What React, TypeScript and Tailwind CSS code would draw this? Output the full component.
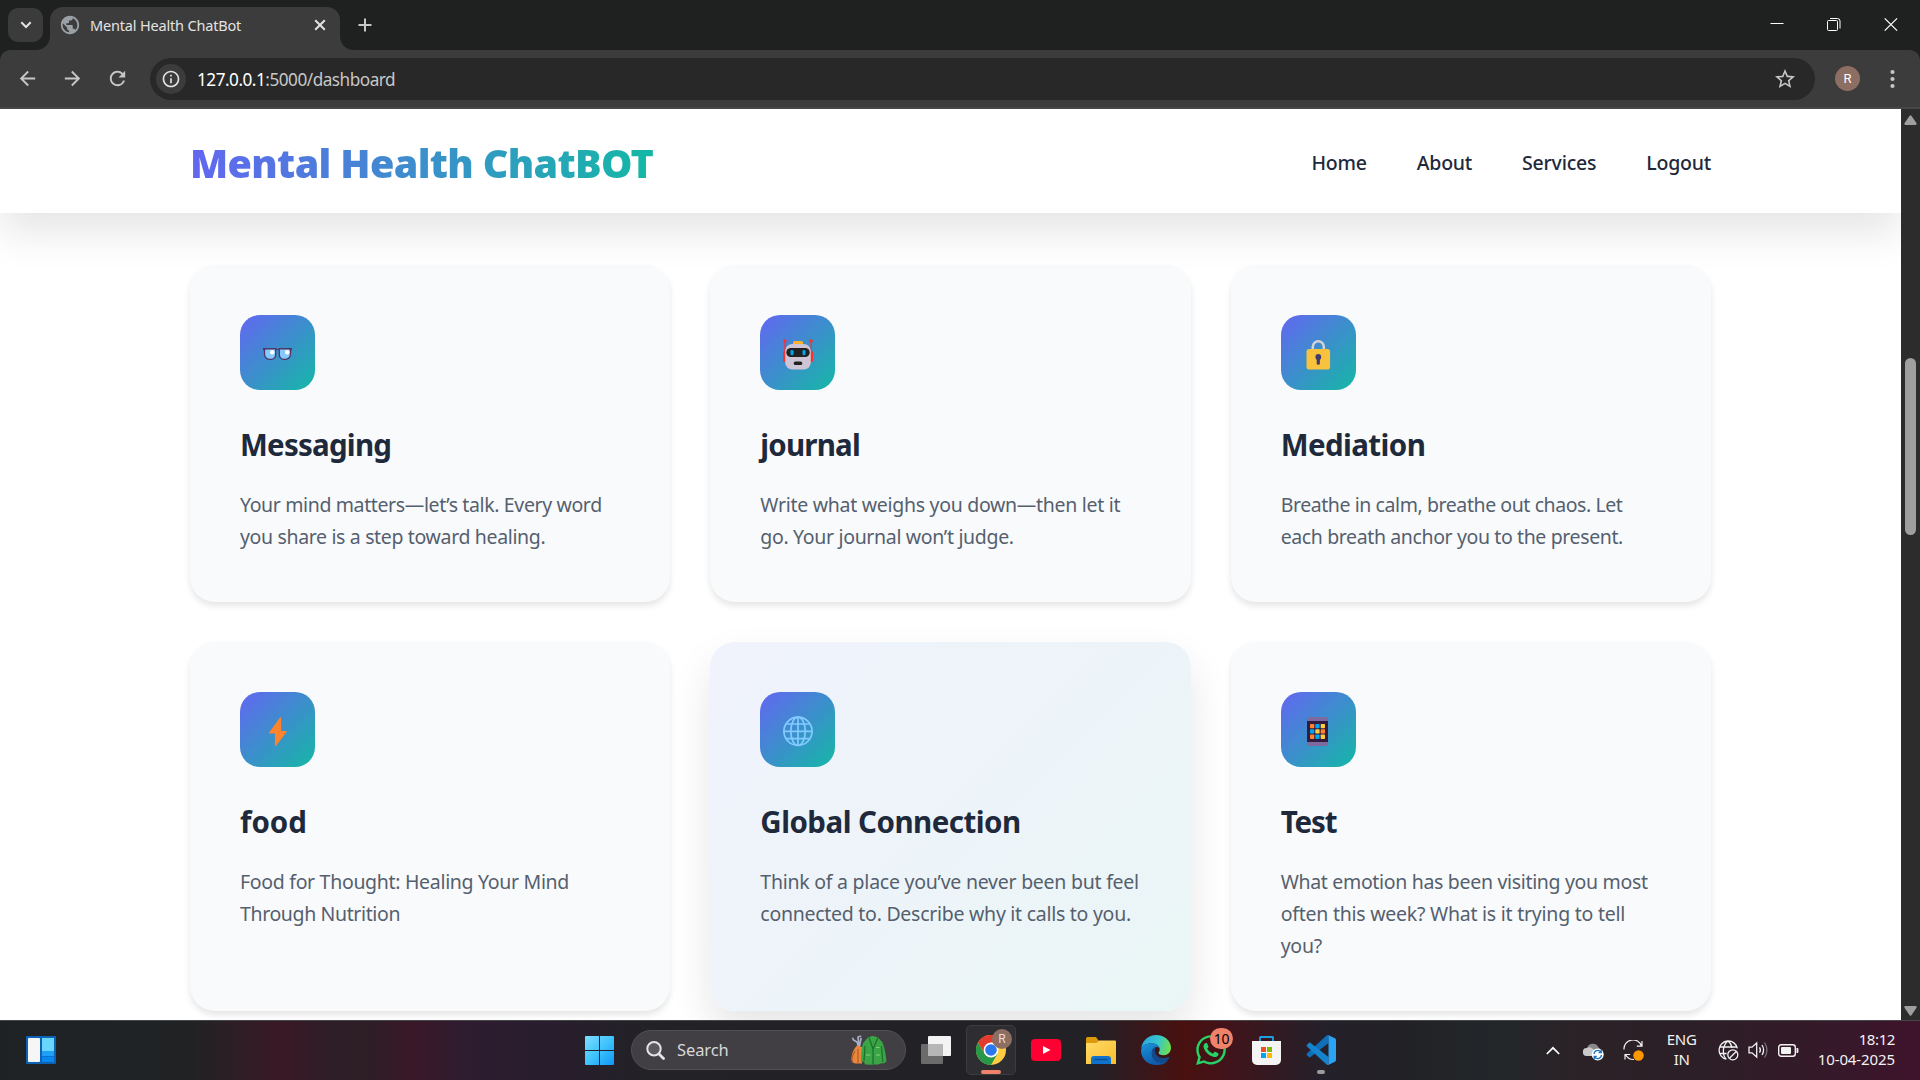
import type { ReactNode } from "react";
import { MdArrowBack, MdArrowForward, MdInfoOutline, MdPublic, MdRefresh, MdStarBorder } from "react-icons/md";
import { FaWhatsapp } from "react-icons/fa";

function TabStrip() {
  return (
    <div className="flex h-[50px] items-start bg-[#1f2120]">
      <div className="mt-2 ml-2 flex h-[34px] w-[35px] items-center justify-center rounded-[10px] bg-[#3b3b3b]">
        <svg width="12" height="8" viewBox="0 0 12 8" fill="none" stroke="#e3e3e3" strokeWidth="2">
          <path d="M1.3 1.3 6 6l4.700-4.700" />
        </svg>
      </div>
      <div className="relative mt-[7px] ml-[7px] flex h-[43px] w-[290px] items-center rounded-t-[13px] bg-[#3c3c3c] pl-[9px]">
        <svg className="absolute bottom-0 -left-[14px]" width="14" height="14" viewBox="0 0 14 14" fill="#3c3c3c">
          <path d="M14 0v14H0C8 14 14 8 14 0Z" />
        </svg>
        <svg className="absolute -right-[14px] bottom-0" width="14" height="14" viewBox="0 0 14 14" fill="#3c3c3c">
          <path d="M0 0v14h14C6 14 0 8 0 0Z" />
        </svg>
        <MdPublic className="mb-[7px] size-[22px] text-[#9aa0a6]" />
        <span className="mb-[7px] ml-[9px] w-[224px] whitespace-nowrap text-[14.5px] leading-none tracking-[-0.18px] text-[#e3e3e3]">
          Mental Health ChatBot
        </span>
        <svg className="mb-[7px]" width="12" height="12" viewBox="0 0 12 12" stroke="#e3e3e3" strokeWidth="2">
          <path d="m1.200 1.200 9.600 9.600M10.800 1.200 1.200 10.800" />
        </svg>
      </div>
      <svg className="mt-[18px] ml-[18px]" width="14" height="14" viewBox="0 0 14 14" stroke="#c7c7c7" strokeWidth="2">
        <path d="M7 .5v13M.5 7h13" />
      </svg>
      <div className="mt-[18px] mr-[22px] ml-auto flex items-start gap-[43px]">
        <svg width="14" height="13" viewBox="0 0 14 13">
          <path d="M.5 5.500h13" stroke="#fff" />
        </svg>
        <svg width="14" height="13" viewBox="0 0 14 13" fill="none" stroke="#fff">
          <rect x=".5" y="2.500" width="10" height="10" rx="1" />
          <path d="M3 .5h7.500a2.500 2.500 0 0 1 2.500 2.500v7.500" />
        </svg>
        <svg width="14" height="13" viewBox="0 0 14 13" stroke="#fff" strokeWidth="1.200">
          <path d="m.7.4 12.400 12.200M13.100.4.7 12.600" />
        </svg>
      </div>
    </div>
  );
}

function Toolbar() {
  return (
    <div className="bg-[#1f2120]">
      <div className="flex h-[59px] items-center rounded-t-[10px] border-b-2 border-[#474747] bg-[#3c3c3c] pl-4 text-[#c7c7c7]">
        <MdArrowBack className="size-[23px]" />
        <MdArrowForward className="ml-[22px] size-[23px]" />
        <MdRefresh className="ml-[22px] size-[23px]" />
        <div className="mt-px ml-[21px] flex h-[42px] w-[1665px] items-center rounded-full bg-[#282828] pr-[18px] pl-[6px]">
          <span className="flex size-[30px] items-center justify-center rounded-full bg-[#3c3c3c]">
            <MdInfoOutline className="size-5 text-[#e3e3e3]" />
          </span>
          <span className="mt-px ml-[11px] whitespace-nowrap text-[17.2px] leading-none tracking-[-0.5px] text-[#c7c7c7]">
            <span className="text-white">127.0.0.1</span>:5000/dashboard
          </span>
          <MdStarBorder className="ml-auto size-6" />
        </div>
        <div className="ml-5 flex size-[25px] items-center justify-center rounded-full bg-[#8d6e63] font-['Roboto'] text-[13px] leading-none text-white">
          R
        </div>
        <svg className="ml-[30px]" width="5" height="20" viewBox="0 0 5 20" fill="#c7c7c7">
          <circle cx="2.500" cy="3" r="2.100" />
          <circle cx="2.500" cy="10" r="2.100" />
          <circle cx="2.500" cy="17" r="2.100" />
        </svg>
      </div>
    </div>
  );
}

function SiteHeader() {
  return (
    <header className="relative z-10 flex h-[104px] items-center justify-between bg-white px-[190px] pt-[3px] shadow-[0_20px_40px_rgba(0,0,0,0.1)]">
      <h1 className="bg-linear-to-r/srgb from-[#6366f1] to-[#14b8a6] bg-clip-text whitespace-nowrap text-[39.5px] leading-[60px] font-black tracking-[-0.65px] text-transparent">
        Mental Health ChatBOT
      </h1>
      <nav className="flex gap-[50px] text-[19.5px] leading-8 font-medium tracking-[-0.22px] text-[#1e293b]">
        <a>Home</a>
        <a>About</a>
        <a>Services</a>
        <a>Logout</a>
      </nav>
    </header>
  );
}

const glasses = (
  <>
    <g fill="#83cbff" stroke="#533566" strokeWidth="1.300">
      <path d="M24.500 33.800h11.200v5.700a4.500 4.500 0 0 1-4.500 4.800h-1.700a5 5 0 0 1-5-5.300Z" />
      <path d="M39.300 33.800h11.200V39a5 5 0 0 1-5 5.300h-1.700a4.500 4.500 0 0 1-4.500-4.800Z" />
    </g>
    <path d="M23 33h12.800q1.700 1.800 3.400 0H52v2.200h-1.200L49 34.100h-9.300q-2.200 1.900-4.400 0H26l-1.800 1.100H23Z" fill="#533566" />
    <circle cx="32.200" cy="37.300" r="2.200" fill="#fff" />
    <circle cx="47.200" cy="37.300" r="2.200" fill="#fff" />
  </>
);

const robot = (
  <>
    <g fill="#f8312f">
      <rect x="23" y="36" width="4" height="11" rx="1.500" />
      <rect x="49" y="36" width="4" height="11" rx="1.500" />
      <path d="M24.300 26h1.200v12h-1.200zM50.500 26h1.200v12h-1.200z" />
      <circle cx="24.900" cy="26" r="1.700" />
      <circle cx="51.100" cy="26" r="1.700" />
    </g>
    <rect x="33" y="26" width="10" height="5" rx="1.500" fill="#ffb02e" />
    <rect x="25.200" y="29" width="25.600" height="25.500" rx="7" fill="#cdc4d6" />
    <rect x="26.300" y="33" width="23.400" height="9" rx="4.500" fill="#212121" />
    <rect x="30.500" y="35" width="3" height="5.200" rx="1.300" fill="#00a6ed" />
    <rect x="42.500" y="35" width="3" height="5.200" rx="1.300" fill="#00a6ed" />
    <rect x="33.700" y="46.500" width="8.600" height="3.600" rx="1.700" fill="#212121" />
  </>
);

const lock = (
  <>
    <path d="M31.800 36v-4.300a5.500 5.500 0 0 1 11 0V36" fill="none" stroke="#d3d3d3" strokeWidth="2.500" />
    <rect x="25.500" y="34" width="23.600" height="20.500" rx="2.800" fill="#f9c23c" />
    <circle cx="37.300" cy="42" r="2.900" fill="#433b6b" />
    <rect x="35.700" y="42" width="3.200" height="7.700" rx="1.500" fill="#433b6b" />
  </>
);

const bolt = <path d="M39.700 26c.6-.8 1.500-.5 1.500.4L41 39h4.800c.7 0 1 .6.6 1.200L36.300 53.600c-.6.8-1.500.5-1.500-.4L35 41.500h-5.200c-.8 0-1.100-.7-.6-1.300Z" fill="#ff822d" />;

const globe = (
  <g fill="none" stroke="#83cbff" strokeWidth="1.700">
    <circle cx="38" cy="39.300" r="14.100" />
    <ellipse cx="38" cy="39.300" rx="7.200" ry="14.100" />
    <path d="M38 25.200v28.200M24 39.300h28M26.500 32h23M26.500 46.600h23" />
  </g>
);

const phone = (
  <>
    <rect x="26" y="25" width="21" height="29" rx="2.600" fill="#7d6aa0" />
    <path d="M26 29h21v21H26z" fill="#321b41" />
    <g fill="#ff822d">
      <rect x="29" y="32" width="4.300" height="4.300" rx=".7" />
      <rect x="39.700" y="37.300" width="4.300" height="4.300" rx=".7" />
      <rect x="29" y="42.600" width="4.300" height="4.300" rx=".7" />
    </g>
    <g fill="#00a6ed">
      <rect x="34.300" y="32" width="4.300" height="4.300" rx=".7" />
      <rect x="29" y="37.300" width="4.300" height="4.300" rx=".7" />
      <rect x="34.300" y="42.600" width="4.300" height="4.300" rx=".7" />
    </g>
    <g fill="#ffce3b">
      <rect x="39.700" y="32" width="4.300" height="4.300" rx=".7" />
      <rect x="34.300" y="37.300" width="4.300" height="4.300" rx=".7" />
      <rect x="39.700" y="42.600" width="4.300" height="4.300" rx=".7" />
    </g>
  </>
);

type Feature = { title: string; titleClass: string; icon: ReactNode; lines: { text: string; track: string }[]; active?: boolean };

const features: Feature[] = [
  {
    title: "Messaging",
    titleClass: "tracking-[-0.75px]",
    icon: glasses,
    lines: [
      { text: "Your mind matters—let’s talk. Every word", track: "tracking-[-0.37px]" },
      { text: "you share is a step toward healing.", track: "tracking-[-0.35px]" },
    ],
  },
  {
    title: "journal",
    titleClass: "tracking-[-0.8px]",
    icon: robot,
    lines: [
      { text: "Write what weighs you down—then let it", track: "tracking-[-0.29px]" },
      { text: "go. Your journal won’t judge.", track: "tracking-[-0.33px]" },
    ],
  },
  {
    title: "Mediation",
    titleClass: "tracking-[-0.58px]",
    icon: lock,
    lines: [
      { text: "Breathe in calm, breathe out chaos. Let", track: "tracking-[-0.42px]" },
      { text: "each breath anchor you to the present.", track: "tracking-[-0.38px]" },
    ],
  },
  {
    title: "food",
    titleClass: "tracking-[0px]",
    icon: bolt,
    lines: [
      { text: "Food for Thought: Healing Your Mind", track: "tracking-[-0.31px]" },
      { text: "Through Nutrition", track: "tracking-[-0.37px]" },
    ],
  },
  {
    title: "Global Connection",
    titleClass: "tracking-[-0.52px]",
    icon: globe,
    active: true,
    lines: [
      { text: "Think of a place you’ve never been but feel", track: "tracking-[-0.25px]" },
      { text: "connected to. Describe why it calls to you.", track: "tracking-[-0.27px]" },
    ],
  },
  {
    title: "Test",
    titleClass: "tracking-[-1.1px]",
    icon: phone,
    lines: [
      { text: "What emotion has been visiting you most", track: "tracking-[-0.32px]" },
      { text: "often this week? What is it trying to tell", track: "tracking-[-0.24px]" },
      { text: "you?", track: "tracking-[-0.25px]" },
    ],
  },
];

function FeatureCard({ title, titleClass, icon, lines, active }: Feature) {
  return (
    <article
      className={
        active
          ? "relative rounded-[25px] bg-linear-135/srgb from-[#f0f2fc] to-[#eaf6f6] p-[50px] shadow-[0_20px_40px_rgba(0,0,0,0.1)]"
          : "relative rounded-[25px] bg-[#f8fafc] p-[50px] shadow-[0_4px_6px_rgba(0,0,0,0.1)]"
      }
    >
      <div className="size-[75px] rounded-[20px] bg-linear-135/srgb from-[#6366f1] to-[#14b8a6]">
        <svg width="75" height="75" viewBox="0 0 75 75">{icon}</svg>
      </div>
      <h2 className={`mt-[31px] text-[29.5px] leading-[48px] font-bold text-[#1e293b] ${titleClass}`}>{title}</h2>
      <p className="mt-5 text-[19.5px] leading-8 text-[#555f6e]">
        {lines.map((l) => (
          <span key={l.text} className={`block whitespace-nowrap ${l.track}`}>
            {l.text}
          </span>
        ))}
      </p>
    </article>
  );
}

function Scrollbar() {
  return (
    <div className="flex w-[19px] flex-col items-center bg-[#2c2c2c]">
      <svg className="mt-[6px]" width="13" height="10" viewBox="0 0 13 10" fill="#9f9f9f">
        <path d="M5.600.8a1.200 1.200 0 0 1 1.800 0l5 7.200c.6.9.1 1.900-.9 1.900h-10c-1 0-1.500-1-.9-1.900Z" />
      </svg>
      <div className="mt-[233px] h-[177px] w-[11px] rounded-full bg-[#9f9f9f]" />
      <svg className="mt-auto mb-1" width="13" height="10" viewBox="0 0 13 10" fill="#9f9f9f">
        <path d="M5.600 9.200a1.200 1.200 0 0 0 1.800 0l5-7.200c.6-.9.1-1.900-.9-1.900h-10C.5.1 0 1.100.6 2Z" />
      </svg>
    </div>
  );
}

function Tile({ children, className = "" }: { children: ReactNode; className?: string }) {
  return <div className={`relative flex h-[50px] w-[50px] items-center justify-center ${className}`}>{children}</div>;
}

function TaskbarCenter() {
  return (
    <div className="mb-px ml-[518px] flex items-center">
      <Tile>
        <svg width="29" height="29" viewBox="0 0 29 29">
          <defs>
            <linearGradient id="win" x1="0" y1="0" x2="1" y2="1">
              <stop offset="0" stopColor="#7fdcff" />
              <stop offset=".5" stopColor="#3fc4fb" />
              <stop offset="1" stopColor="#0f96f8" />
            </linearGradient>
          </defs>
          <path fill="url(#win)" d="M1 0h13v14H0V1a1 1 0 0 1 1-1Zm14 0h13a1 1 0 0 1 1 1v13H15ZM0 15h14v14H1a1 1 0 0 1-1-1Zm15 0h14v13a1 1 0 0 1-1 1H15Z" />
        </svg>
      </Tile>
      <div className="mr-[5px] ml-[7px] flex h-10 w-[275px] items-center rounded-full border border-[#515054] bg-[#413f43] pr-[18px] pl-[14px]">
        <svg width="19" height="19" viewBox="0 0 19 19" fill="none" stroke="#e4e4e4">
          <circle cx="8" cy="7.800" r="6.700" strokeWidth="2" fill="#5b595e" />
          <path d="m13 12.900 4.500 4.500" strokeWidth="2.800" strokeLinecap="round" />
        </svg>
        <span className="ml-[12px] text-[16.5px] leading-none tracking-[-0.1px] text-[#d8d8d8]">Search</span>
        <svg className="ml-auto" width="37" height="30" viewBox="0 0 37 30">
          <g stroke="#a9adc6" strokeWidth="1.700" fill="none" strokeLinecap="round">
            <path d="M3.500 5 7 7l2 6M8 2l1 10M11 3.500 9.500 11M8 2l2.500-.8M3.500 5 2.800 3.500" />
          </g>
          <path d="M7 10.500 12 12v16.500H5.500Q1 28 1.500 23C2 17 4 14 7 10.500Z" fill="#e8873c" />
          <path d="M5 16c-2.500 3.500-4 7-2.500 11M8 14v14" stroke="#b65a22" strokeWidth="1.200" fill="none" />
          <path d="M18 2.500Q22.500-.5 28 2.500l4.500 5c2.300 6 3.300 12 4 19L34 28.300h-2.500L28 29.500h-5l-2 .3-6-.3-1-3-3 .5c0-8 .5-14 2-19Z" fill="#3aa446" />
          <path d="m19 2.500 4 11.500 5-11.500M23 14v15M15 11l-1 15M31.500 11l1.300 16" stroke="#1c702b" strokeWidth="1.200" fill="none" />
          <path d="M16 20h4.500M26 20h4M26 12.500h3.500" stroke="#81d17a" strokeWidth="1" />
        </svg>
      </div>
      <Tile>
        <svg width="30" height="28" viewBox="0 0 30 28">
          <rect x="7" y="0" width="23" height="20" rx="1" fill="#f3f3f3" />
          <rect x="0" y="8" width="22" height="20" rx="1" fill="#6b6b6c" />
          <path d="M7 8h15v12H7z" fill="#b6b6b6" />
        </svg>
      </Tile>
      <div className="ml-[5px] flex gap-[5px]">
        <Tile className="rounded-[5px] border border-[#3d3c41] bg-[#2e2d32]">
          <svg width="30" height="30" viewBox="0 0 30 30">
            <circle cx="15" cy="15" r="15" fill="#ffcd40" />
            <path d="M2 7.500A15 15 0 0 1 28 7.500H15L8.500 18.800Z" fill="#e33b2e" />
            <path d="M2 7.500A15 15 0 0 0 15 30l6.500-11.300-6.500-3.500-6.500 3.500Z" fill="#279847" />
            <circle cx="15" cy="15" r="7.400" fill="#fff" />
            <circle cx="15" cy="15" r="5.800" fill="#2a78ec" />
          </svg>
          <div className="absolute top-[3px] right-[3px] flex size-5 items-center justify-center rounded-full bg-[#8d6e63] font-['Roboto'] text-[12px] leading-none text-[#e8dcd8]">
            R
          </div>
          <div className="absolute bottom-0 h-1 w-5 rounded-full bg-[#f0826a]" />
        </Tile>
        <Tile>
          <svg width="30" height="22" viewBox="0 0 30 22">
            <rect width="30" height="22" rx="4" fill="#f03" />
            <path d="m12 7 7.500 4L12 15Z" fill="#fff" />
          </svg>
        </Tile>
        <Tile>
          <svg width="30" height="27" viewBox="0 0 30 27">
            <defs>
              <linearGradient id="folder" x1="0" y1="0" x2="1" y2="1">
                <stop offset="0" stopColor="#ffda68" />
                <stop offset="1" stopColor="#f9bd2c" />
              </linearGradient>
            </defs>
            <path d="M0 1.500Q0 0 1.500 0H10l2.500 3.500V8H0Z" fill="#dc9a0a" />
            <path d="M0 6h10.500L13 3.500h16a1 1 0 0 1 1 1V27H0Z" fill="url(#folder)" />
            <path d="M5 27v-5a3 3 0 0 1 3-3h14a3 3 0 0 1 3 3v5Z" fill="#0f73cd" />
            <path d="M8.500 22.500h13" stroke="#084a8e" strokeWidth="1.400" />
          </svg>
        </Tile>
        <Tile>
          <svg width="30" height="30" viewBox="0 0 30 30">
            <defs>
              <linearGradient id="edgeTop" x1="0" y1=".3" x2="1" y2=".5">
                <stop offset="0" stopColor="#2aa5de" />
                <stop offset=".55" stopColor="#36c6cf" />
                <stop offset="1" stopColor="#6fe04a" />
              </linearGradient>
              <linearGradient id="edgeBody" x1="0" y1="0" x2=".5" y2="1">
                <stop offset="0" stopColor="#1a94de" />
                <stop offset="1" stopColor="#0f58a8" />
              </linearGradient>
            </defs>
            <path d="M.2 13.500C1.200 5.500 7.500 0 15 0c8.500 0 15 6 15 12.800 0 4.500-3.300 7.400-7.300 7.400-3.200 0-5.200-1-5.200-2.200 0-1 1.200-1.500 1.200-3.800C18.700 11 15 8.200 10.500 8.200 6 8.200 1.500 10.500.2 13.500Z" fill="url(#edgeTop)" />
            <path d="M.1 14.500C.7 10.500 5.500 8.200 10.500 8.200c4 0 7 2 8 4.700-4-2.500-7.700.8-7.700 5.300 0 6.500 6 10 11.700 8.800 2-.4 3-.8 4.500-1.600C24.500 28.300 20.500 30 15.500 30 6.500 30-.6 23 .1 14.500Z" fill="url(#edgeBody)" />
            <path d="M10.800 18.200c0-3.600 2-6 4.500-6.300-2 1.800-1.800 5-.3 7.300 2.500 3.800 7.500 4.700 12.200 3 .8-.3 1.300.3.900 1-1.800 3-5 4.400-8 4.300-5-.2-9.300-3.700-9.300-9.300Z" fill="#124a8d" />
          </svg>
        </Tile>
        <Tile>
          <FaWhatsapp className="size-[34px] text-[#25d366]" />
          <div className="absolute top-[3px] right-[3px] flex h-[21px] w-[23px] items-center justify-center rounded-full bg-[#f0826a] text-[14px] leading-none tracking-[-0.3px] text-black">
            10
          </div>
        </Tile>
        <Tile>
          <svg width="29" height="29" viewBox="0 0 29 29">
            <path d="M8 6V1.500Q8 1 8.500 1h12q.5 0 .5.500V6" fill="none" stroke="#1f9fe2" strokeWidth="1.800" />
            <path d="M0 5h29v19a5 5 0 0 1-5 5H5a5 5 0 0 1-5-5Z" fill="#f4f4f4" />
            <path d="M9 11h5v5H9z" fill="#f25022" />
            <path d="M15 11h5v5h-5z" fill="#7fba00" />
            <path d="M9 17h5v5H9z" fill="#00a4ef" />
            <path d="M15 17h5v5h-5z" fill="#ffb900" />
          </svg>
        </Tile>
        <Tile>
          <svg width="30" height="30" viewBox="0 0 30 30">
            <path d="m1.200 20.500 1.800 1.600c.5.400 1.100.4 1.600 0L22.500 8V0h-.8c-.5 0-1 .3-1.400.700L1.200 18.200c-.7.700-.7 1.600 0 2.300Z" fill="#0f6fb8" />
            <path d="m1.200 9.500 1.800-1.600c.5-.4 1.100-.4 1.600 0L22.500 22v8h-.8c-.5 0-1-.3-1.400-.7L1.200 11.800c-.7-.7-.7-1.600 0-2.300Z" fill="#1583ce" />
            <path d="m22 30 7-3.300a1.800 1.800 0 0 0 1-1.600V4.900a1.800 1.800 0 0 0-1-1.600L22 0c.4.400.5 1 .5 1.500v27c0 .6-.1 1.100-.5 1.500Z" fill="#2ba2f2" />
          </svg>
          <div className="absolute bottom-px h-1 w-2 rounded-full bg-[#9b9b9b]" />
        </Tile>
      </div>
    </div>
  );
}

function Tray() {
  return (
    <div className="mr-[25px] mb-px ml-auto flex items-center text-[15px] leading-5 text-[#f2f2f2]">
      <svg width="14" height="9" viewBox="0 0 14 9" fill="none" stroke="#fff" strokeWidth="1.700">
        <path d="m.8 8 6.200-6.200L13.200 8" />
      </svg>
      <svg className="mt-[3px] ml-[23px]" width="21" height="18" viewBox="0 0 21 18">
        <path d="M4 6a6 6 0 0 1 11.500-1.500Q18 6 17.500 9L12 12Z" fill="#8a8a8a" />
        <path d="M4 13a4 4 0 0 1-.5-8Q7 3 10 6l5 4v3Z" fill="#c9c9c9" />
        <circle cx="14.700" cy="11.500" r="6" fill="#fff" />
        <path d="M11 11a3.800 3.800 0 0 1 6.800-2.200M18.400 12a3.800 3.800 0 0 1-6.800 2.200M18.200 6.800V9.500h-2.600M11.200 16.200v-2.700h2.600" fill="none" stroke="#1a73c9" strokeWidth="1.300" />
      </svg>
      <svg className="ml-[19px]" width="21" height="21" viewBox="0 0 21 21" fill="none" stroke="#f2f2f2" strokeWidth="1.200">
        <path d="M1 9.500A9 9 0 0 1 18.500 6M19 1v5.200h-5.200M2 19.500v-5h5.200M2.500 14.500A9 9 0 0 0 11 19.500" />
        <circle cx="15.500" cy="15.500" r="5.200" fill="#ff9800" stroke="none" />
      </svg>
      <div className="mb-[3px] ml-[22px] flex w-[32px] flex-col items-center tracking-[-0.2px]">
        <span>ENG</span>
        <span>IN</span>
      </div>
      <svg className="ml-[20px]" width="21" height="21" viewBox="0 0 21 21" fill="none" stroke="#f2f2f2" strokeWidth="1.300">
        <path d="M8.500 19.200a9.200 9.200 0 1 1 10.800-10.800M7.800 18.800C4 14 4.500 5 10 1c2.500 1.800 3.600 4.400 4 7M1.600 7h17M1.600 13.500h7" />
        <circle cx="14.800" cy="14.800" r="5" />
        <path d="m11.500 18.200 6.700-6.700" />
      </svg>
      <svg className="ml-[9px]" width="21" height="18" viewBox="0 0 21 18" fill="none" stroke="#f2f2f2" strokeWidth="1.300">
        <path d="M1 6.200h3L8.700 2v14L4 11.800H1ZM11.500 6.300q1.800 2.700 0 5.400M14 4q3.200 5 0 10" />
        <path d="M16.500 1.500q5 7.500 0 15" stroke="#77707a" />
      </svg>
      <svg className="ml-[9px]" width="21" height="13" viewBox="0 0 21 13">
        <rect x=".7" y=".7" width="16.600" height="11.600" rx="2.500" fill="none" stroke="#f2f2f2" strokeWidth="1.400" />
        <rect x="3" y="3" width="10" height="7" rx="1" fill="#f2f2f2" />
        <path d="M18.500 4h1a1 1 0 0 1 .9 1v3a1 1 0 0 1-.9 1h-1Z" fill="#f2f2f2" />
      </svg>
      <div className="mb-[3px] ml-[19px] flex flex-col items-end tracking-[-0.1px]">
        <span className="tracking-[-0.4px]">18:12</span>
        <span>10-04-2025</span>
      </div>
    </div>
  );
}

function Taskbar() {
  return (
    <div className="flex h-[60px] items-center border-t border-[#454647] bg-[linear-gradient(90deg,#1f2224_0,#202224_190px,#2c1f25_230px,#3a1926_280px,#2e1e27_330px,#2e1e26_370px,#3a1828_412px,#2e1c30_465px,#271e2c_570px,#232227_640px,#222126_1090px,#34191d_1135px,#49100f_1185px,#42131a_1225px,#25202a_1320px,#222226_1400px,#23272a_1500px,#2b2227_1580px,#2d1e27_1720px,#37182a_1850px,#3f132c_1920px)]">
      <svg className="mb-px ml-[26px]" width="30" height="28" viewBox="0 0 30 28">
        <rect width="30" height="28" rx="1" fill="#0c63b5" />
        <rect x="2" y="2" width="12" height="24" rx="1" fill="#f6f6f6" />
        <path d="M16 2h12v13H16z" fill="#68d5fc" />
        <path d="M16 15h12v5H16z" fill="#1fa0f6" />
        <path d="M16 20.500h12V26H16z" fill="#0a86ee" />
      </svg>
      <TaskbarCenter />
      <Tray />
    </div>
  );
}

export default function App() {
  return (
    <div className="flex h-[1080px] w-[1920px] flex-col overflow-hidden font-['Noto_Sans',sans-serif]">
      <TabStrip />
      <Toolbar />
      <div className="flex h-[911px] overflow-hidden bg-white">
        <div className="w-[1901px] overflow-hidden">
          <SiteHeader />
          <main className="mx-[190px] mt-[52px] grid grid-cols-3 grid-rows-[337px_369px] gap-10">
            {features.map((f) => (
              <FeatureCard key={f.title} {...f} />
            ))}
          </main>
        </div>
        <Scrollbar />
      </div>
      <Taskbar />
    </div>
  );
}
